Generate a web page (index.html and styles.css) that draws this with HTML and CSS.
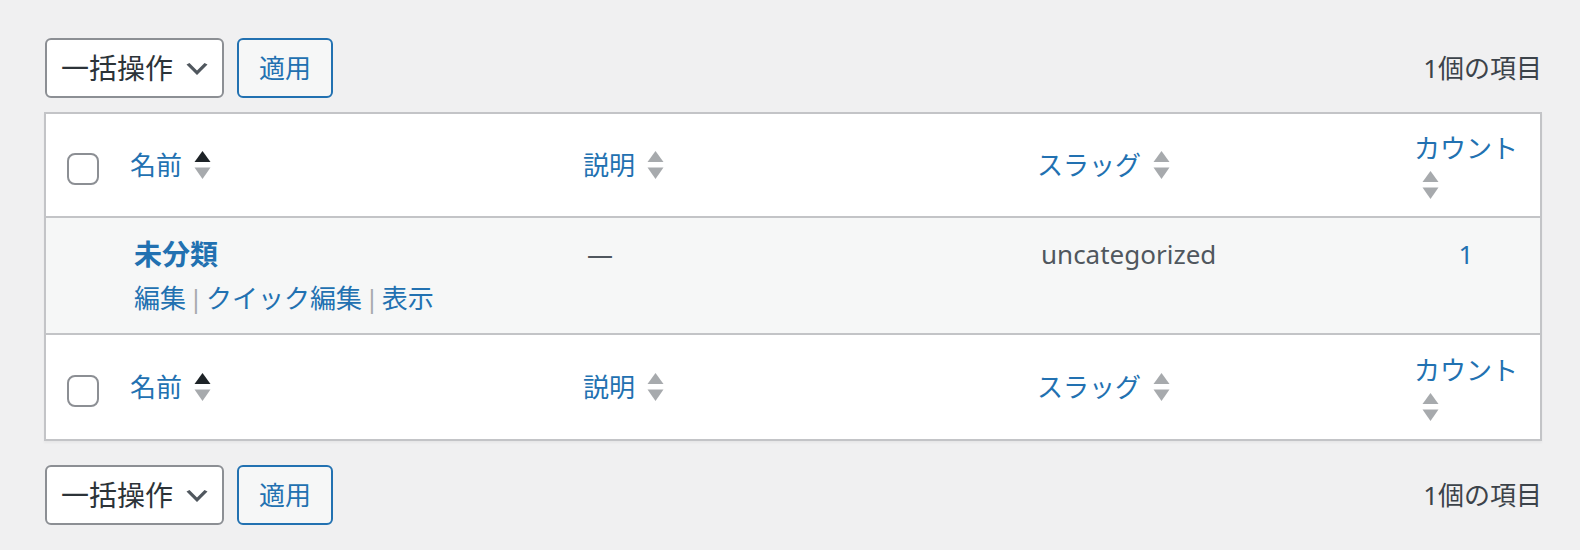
FILE: index.html
```html
<!DOCTYPE html>
<html lang="ja">
<head>
<meta charset="utf-8">
<title>カテゴリー</title>
<link rel="stylesheet" href="styles.css">
</head>
<body>
<div class="wrap">
  <div class="tablenav tablenav-top">
    <div class="bulk-select">
      <span class="bulk-label">一括操作</span>
      <svg class="chevron" viewBox="0 0 20 20" aria-hidden="true"><path d="M5 6l5 5 5-5 2 1-7 7-7-7 2-1z"/></svg>
    </div>
    <button class="apply-btn" type="button">適用</button>
    <span class="displaying-num">1個の項目</span>
  </div>

  <table class="list-table">
    <colgroup>
      <col class="col-check">
      <col class="col-name">
      <col class="col-desc">
      <col class="col-slug">
      <col class="col-count">
    </colgroup>
    <thead>
      <tr>
        <th class="check-col"><span class="checkbox"></span></th>
        <th class="sortable"><a class="sort-link" href="#"><span>名前</span><svg class="indicator" viewBox="0 0 17 30" aria-hidden="true"><polygon class="tri-on" points="0.5,12 8.5,1 16.5,12"/><polygon class="tri-off" points="0.5,17.5 16.5,17.5 8.5,29"/></svg></a></th>
        <th class="sortable"><a class="sort-link" href="#"><span>説明</span><svg class="indicator" viewBox="0 0 17 30" aria-hidden="true"><polygon class="tri-off" points="0.5,12 8.5,1 16.5,12"/><polygon class="tri-off" points="0.5,17.5 16.5,17.5 8.5,29"/></svg></a></th>
        <th class="sortable"><a class="sort-link" href="#"><span>スラッグ</span><svg class="indicator" viewBox="0 0 17 30" aria-hidden="true"><polygon class="tri-off" points="0.5,12 8.5,1 16.5,12"/><polygon class="tri-off" points="0.5,17.5 16.5,17.5 8.5,29"/></svg></a></th>
        <th class="sortable"><a class="sort-link stacked" href="#"><span>カウント</span><svg class="indicator" viewBox="0 0 17 30" aria-hidden="true"><polygon class="tri-off" points="0.5,12 8.5,1 16.5,12"/><polygon class="tri-off" points="0.5,17.5 16.5,17.5 8.5,29"/></svg></a></th>
      </tr>
    </thead>
    <tbody>
      <tr class="alternate">
        <td class="check-col"></td>
        <td class="name-cell">
          <strong class="row-title"><a href="#">未分類</a></strong>
          <div class="row-actions"><a href="#">編集</a><span class="sep"> | </span><a href="#">クイック編集</a><span class="sep"> | </span><a href="#">表示</a></div>
        </td>
        <td class="desc-cell">—</td>
        <td class="slug-cell">uncategorized</td>
        <td class="count-cell"><a href="#">1</a></td>
      </tr>
    </tbody>
    <tfoot>
      <tr>
        <th class="check-col"><span class="checkbox"></span></th>
        <th class="sortable"><a class="sort-link" href="#"><span>名前</span><svg class="indicator" viewBox="0 0 17 30" aria-hidden="true"><polygon class="tri-on" points="0.5,12 8.5,1 16.5,12"/><polygon class="tri-off" points="0.5,17.5 16.5,17.5 8.5,29"/></svg></a></th>
        <th class="sortable"><a class="sort-link" href="#"><span>説明</span><svg class="indicator" viewBox="0 0 17 30" aria-hidden="true"><polygon class="tri-off" points="0.5,12 8.5,1 16.5,12"/><polygon class="tri-off" points="0.5,17.5 16.5,17.5 8.5,29"/></svg></a></th>
        <th class="sortable"><a class="sort-link" href="#"><span>スラッグ</span><svg class="indicator" viewBox="0 0 17 30" aria-hidden="true"><polygon class="tri-off" points="0.5,12 8.5,1 16.5,12"/><polygon class="tri-off" points="0.5,17.5 16.5,17.5 8.5,29"/></svg></a></th>
        <th class="sortable"><a class="sort-link stacked" href="#"><span>カウント</span><svg class="indicator" viewBox="0 0 17 30" aria-hidden="true"><polygon class="tri-off" points="0.5,12 8.5,1 16.5,12"/><polygon class="tri-off" points="0.5,17.5 16.5,17.5 8.5,29"/></svg></a></th>
      </tr>
    </tfoot>
  </table>

  <div class="tablenav tablenav-bottom">
    <div class="bulk-select">
      <span class="bulk-label">一括操作</span>
      <svg class="chevron" viewBox="0 0 20 20" aria-hidden="true"><path d="M5 6l5 5 5-5 2 1-7 7-7-7 2-1z"/></svg>
    </div>
    <button class="apply-btn" type="button">適用</button>
    <span class="displaying-num">1個の項目</span>
  </div>
</div>
</body>
</html>
```

FILE: styles.css
```css
* {
  box-sizing: border-box;
}

html, body {
  margin: 0;
  padding: 0;
}

body {
  background: #f0f0f1;
  color: #3c434a;
  font-family: "Noto Sans", "Noto Sans CJK JP", sans-serif;
  font-size: 26px;
}

a {
  color: #2271b1;
  text-decoration: none;
}

.wrap {
  padding: 38px 38px 0 44px;
}

/* toolbar */
.tablenav {
  display: flex;
  align-items: center;
  height: 60px;
}

.tablenav-bottom {
  margin-top: 24px;
}

.bulk-select {
  display: flex;
  align-items: center;
  width: 179px;
  height: 60px;
  margin-left: 1px;
  padding-left: 14px;
  background: #fff;
  border: 2px solid #8c8f94;
  border-radius: 6px;
  color: #2c3338;
  font-size: 28px;
  line-height: 56px;
}

.bulk-label {
  white-space: nowrap;
}

.chevron {
  width: 30px;
  height: 30px;
  margin-left: 9px;
  margin-top: 2px;
  fill: #50575e;
  flex: none;
}

.apply-btn {
  height: 60px;
  margin-left: 13px;
  padding: 0 20px;
  background: #f6f7f7;
  border: 2px solid #2271b1;
  border-radius: 6px;
  color: #2271b1;
  font-family: inherit;
  font-size: 26px;
  line-height: 56px;
}

.displaying-num {
  margin-left: auto;
  line-height: 36px;
  color: #3c434a;
}

/* table */
.list-table {
  width: 100%;
  margin-top: 14px;
  border: 2px solid #c3c4c7;
  border-spacing: 0;
  border-collapse: separate;
  table-layout: fixed;
  background: #fff;
  box-shadow: 0 2px 2px rgba(0, 0, 0, 0.04);
}

.col-check { width: 68px; }
.col-name { width: 453px; }
.col-desc { width: 454px; }
.col-slug { width: 371px; }
.col-count { width: 148px; }

.list-table th {
  padding: 0;
  font-weight: 400;
  text-align: left;
  vertical-align: middle;
}

.list-table thead th {
  height: 104px;
  border-bottom: 2px solid #c3c4c7;
}

.list-table tfoot th {
  height: 106px;
  border-top: 2px solid #c3c4c7;
}

.list-table th.check-col {
  padding-left: 21px;
}

.checkbox {
  display: block;
  width: 32px;
  height: 32px;
  margin-top: 8px;
  background: #fff;
  border: 2px solid #8c8f94;
  border-radius: 8px;
}

.sort-link {
  display: flex;
  align-items: center;
  padding: 0 16px;
  line-height: 36px;
  white-space: nowrap;
}

.indicator {
  flex: none;
  width: 17px;
  height: 30px;
  margin-left: 12px;
}

.tri-on {
  fill: #1d2327;
}

.tri-off {
  fill: #a7aaad;
}

.sort-link.stacked {
  flex-direction: column;
  align-items: stretch;
  text-align: center;
}

.sort-link.stacked .indicator {
  align-self: flex-start;
  margin-left: 14px;
  margin-top: 4px;
}

/* body row */
.list-table tbody tr.alternate td {
  background: #f6f7f7;
}

.list-table td {
  padding: 16px 20px;
  vertical-align: top;
  line-height: 40px;
  color: #50575e;
}

.row-title {
  display: block;
  font-size: 28px;
  font-weight: 700;
  line-height: 40px;
}

.row-actions {
  margin-top: 5px;
  line-height: 38px;
  white-space: nowrap;
}

.row-actions .sep {
  color: #a7aaad;
  word-spacing: -4px;
}

.count-cell {
  text-align: center;
}
```
